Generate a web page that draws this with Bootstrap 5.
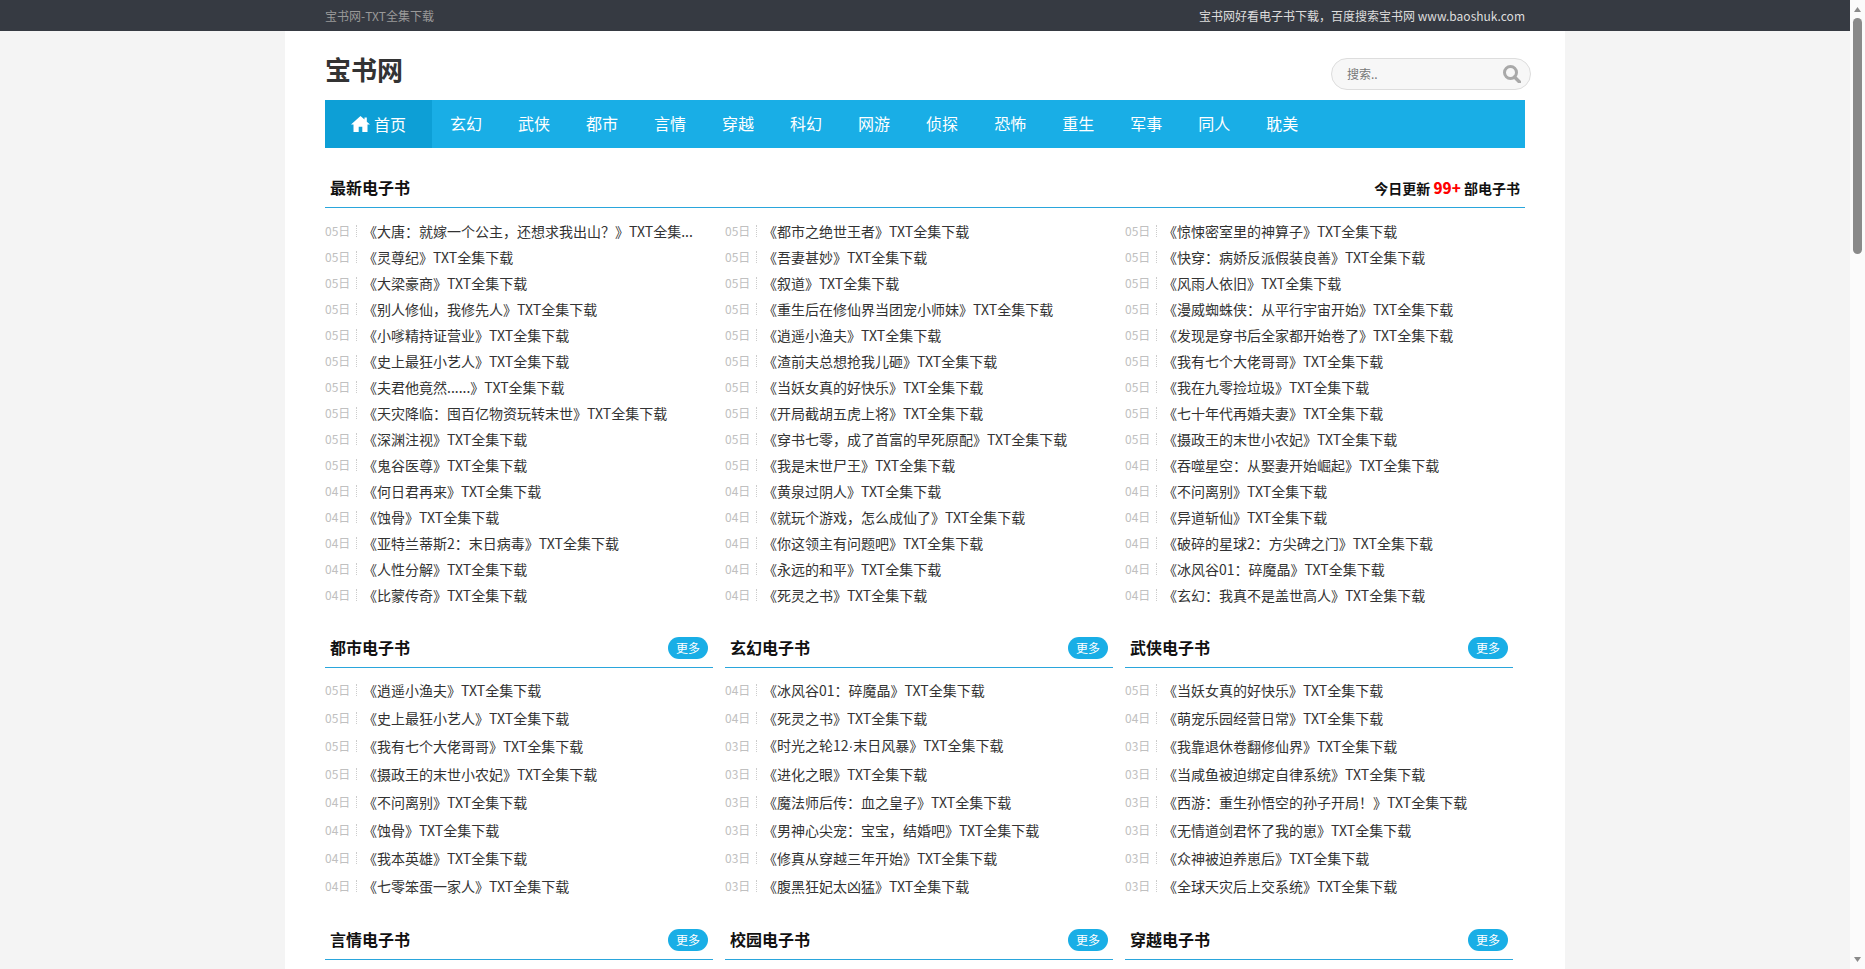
<!DOCTYPE html>
<html lang="zh-CN">
<head>
<meta charset="utf-8">
<title>宝书网-TXT全集下载</title>
<link href="https://cdn.jsdelivr.net/npm/bootstrap@5.3.0/dist/css/bootstrap.min.css" rel="stylesheet">
<style>
body{background:#f4f4f4;color:#333;font-family:"Noto Sans CJK SC","Liberation Sans",sans-serif;font-size:14px;margin-right:15px}
.top-strip{background:#363a42;height:31px;font-size:12px;line-height:31px}
.top-inner{width:1200px;margin:0 auto}
.top-left{color:#999}
.top-right{color:#ddd}
.page-panel{width:1280px;margin:0 auto;padding:0 40px 40px;background:#fff}
.site-head{height:69px}
.site-logo{font-size:26px;font-weight:700;color:#333;line-height:36px;margin-top:20px}
.search-box{width:200px;height:32px;margin:27px -6px 0 0;border:1px solid #ddd;background:#f7f7f7;border-radius:16px;padding:0 9px 0 15px}
.search-box input{font-size:12px;color:#666;width:100%;min-width:0;outline:0;padding:0}
.search-box input::placeholder{color:#777}
.main-nav{background:#19aee6;height:48px}
.main-nav .nav-link{color:#fff;font-size:16px;line-height:47px;height:48px;padding:0 18px}
.main-nav .nav-link.active-tab{background:#0d9fd6;width:107px;padding:0 0 0 26px;display:flex;align-items:center;gap:4px}
.sect-head{height:40px;border-bottom:1px solid #2aa6dc;padding:0 5px;line-height:39px}
.sect-title{font-size:16px;font-weight:700;color:#111;margin:0;line-height:39px}
.sect-note{font-size:14px;font-weight:700;color:#111}
.sect-note b{color:#f00;font-size:15px}
.more-pill{width:40px;height:22px;line-height:22px;background:#19aee6;color:#fff;font-size:12px;text-align:center;text-decoration:none}
.latest-sect{margin-top:20px}
.latest-list{margin-top:10px}
.book-list{list-style:none;margin:0;padding:0}
.book-list li{display:flex;align-items:center;height:26px;white-space:nowrap}
.day-tag{width:32px;flex:none;font-size:12px;line-height:12px;color:#c0c0c0;border-right:1px dotted #ccc}
.book-link{margin-left:6px;color:#333;text-decoration:none}
.narrow-dot{font-family:"Liberation Sans",sans-serif}
.cat-sect{margin-top:20px}
.cat-box{margin-right:12px}
.cat-box .book-list{margin-top:8px}
.cat-box .book-list li{height:28px}
.fake-scroll{position:fixed;top:0;right:0;width:15px;height:100vh;background:#fbfbfb;padding:7px 2px 7px 3px}
.scroll-thumb{width:9px;height:236px;margin-top:6px;background:#8a8a8a;border-radius:5px}
.scroll-arrow{display:block;margin-left:1px}
.scroll-arrow-down{margin-top:auto}
</style>
</head>
<body>
<div class="top-strip">
  <div class="top-inner d-flex justify-content-between">
    <span class="top-left">宝书网-TXT全集下载</span>
    <span class="top-right">宝书网好看电子书下载，百度搜索宝书网 www.baoshuk.com</span>
  </div>
</div>
<div class="page-panel">
  <header class="site-head d-flex justify-content-between align-items-start">
    <div class="site-logo">宝书网</div>
    <form class="search-box d-flex align-items-center">
      <input class="border-0 bg-transparent" type="text" placeholder="搜索..">
      <svg width="18" height="18" viewBox="0 0 18 18" class="flex-shrink-0" aria-hidden="true"><circle cx="7.5" cy="7.5" r="6" fill="none" stroke="#a9a9a9" stroke-width="3"/><path d="M11.5 12 L16.5 17" stroke="#a9a9a9" stroke-width="3.4" stroke-linecap="round"/></svg>
    </form>
  </header>
  <nav class="main-nav nav">
    <a class="nav-link active-tab" href="#"><svg width="19" height="16" viewBox="0 0 19 16" aria-hidden="true"><path fill="#fff" d="M9.5 0 L13.5 3.6 V1.5 H15.8 V5.7 L19 8.6 H16.5 V16 H11.3 V10.8 H7.7 V16 H2.5 V8.6 H0 Z"/></svg>首页</a>
    <a class="nav-link" href="#">玄幻</a>
    <a class="nav-link" href="#">武侠</a>
    <a class="nav-link" href="#">都市</a>
    <a class="nav-link" href="#">言情</a>
    <a class="nav-link" href="#">穿越</a>
    <a class="nav-link" href="#">科幻</a>
    <a class="nav-link" href="#">网游</a>
    <a class="nav-link" href="#">侦探</a>
    <a class="nav-link" href="#">恐怖</a>
    <a class="nav-link" href="#">重生</a>
    <a class="nav-link" href="#">军事</a>
    <a class="nav-link" href="#">同人</a>
    <a class="nav-link" href="#">耽美</a>
  </nav>

  <section class="latest-sect">
    <div class="sect-head d-flex justify-content-between">
      <h2 class="sect-title">最新电子书</h2>
      <div class="sect-note">今日更新 <b>99+</b> 部电子书</div>
    </div>
    <div class="row g-0 latest-list">
      <div class="col-4">
        <ul class="book-list">
          <li><span class="day-tag">05日</span><a class="book-link" href="#">《大唐：就嫁一个公主，还想求我出山？》TXT全集...</a></li>
          <li><span class="day-tag">05日</span><a class="book-link" href="#">《灵尊纪》TXT全集下载</a></li>
          <li><span class="day-tag">05日</span><a class="book-link" href="#">《大梁豪商》TXT全集下载</a></li>
          <li><span class="day-tag">05日</span><a class="book-link" href="#">《别人修仙，我修先人》TXT全集下载</a></li>
          <li><span class="day-tag">05日</span><a class="book-link" href="#">《小嗲精持证营业》TXT全集下载</a></li>
          <li><span class="day-tag">05日</span><a class="book-link" href="#">《史上最狂小艺人》TXT全集下载</a></li>
          <li><span class="day-tag">05日</span><a class="book-link" href="#">《夫君他竟然......》TXT全集下载</a></li>
          <li><span class="day-tag">05日</span><a class="book-link" href="#">《天灾降临：囤百亿物资玩转末世》TXT全集下载</a></li>
          <li><span class="day-tag">05日</span><a class="book-link" href="#">《深渊注视》TXT全集下载</a></li>
          <li><span class="day-tag">05日</span><a class="book-link" href="#">《鬼谷医尊》TXT全集下载</a></li>
          <li><span class="day-tag">04日</span><a class="book-link" href="#">《何日君再来》TXT全集下载</a></li>
          <li><span class="day-tag">04日</span><a class="book-link" href="#">《蚀骨》TXT全集下载</a></li>
          <li><span class="day-tag">04日</span><a class="book-link" href="#">《亚特兰蒂斯2：末日病毒》TXT全集下载</a></li>
          <li><span class="day-tag">04日</span><a class="book-link" href="#">《人性分解》TXT全集下载</a></li>
          <li><span class="day-tag">04日</span><a class="book-link" href="#">《比蒙传奇》TXT全集下载</a></li>
        </ul>
      </div>
      <div class="col-4">
        <ul class="book-list">
          <li><span class="day-tag">05日</span><a class="book-link" href="#">《都市之绝世王者》TXT全集下载</a></li>
          <li><span class="day-tag">05日</span><a class="book-link" href="#">《吾妻甚妙》TXT全集下载</a></li>
          <li><span class="day-tag">05日</span><a class="book-link" href="#">《叙道》TXT全集下载</a></li>
          <li><span class="day-tag">05日</span><a class="book-link" href="#">《重生后在修仙界当团宠小师妹》TXT全集下载</a></li>
          <li><span class="day-tag">05日</span><a class="book-link" href="#">《逍遥小渔夫》TXT全集下载</a></li>
          <li><span class="day-tag">05日</span><a class="book-link" href="#">《渣前夫总想抢我儿砸》TXT全集下载</a></li>
          <li><span class="day-tag">05日</span><a class="book-link" href="#">《当妖女真的好快乐》TXT全集下载</a></li>
          <li><span class="day-tag">05日</span><a class="book-link" href="#">《开局截胡五虎上将》TXT全集下载</a></li>
          <li><span class="day-tag">05日</span><a class="book-link" href="#">《穿书七零，成了首富的早死原配》TXT全集下载</a></li>
          <li><span class="day-tag">05日</span><a class="book-link" href="#">《我是末世尸王》TXT全集下载</a></li>
          <li><span class="day-tag">04日</span><a class="book-link" href="#">《黄泉过阴人》TXT全集下载</a></li>
          <li><span class="day-tag">04日</span><a class="book-link" href="#">《就玩个游戏，怎么成仙了》TXT全集下载</a></li>
          <li><span class="day-tag">04日</span><a class="book-link" href="#">《你这领主有问题吧》TXT全集下载</a></li>
          <li><span class="day-tag">04日</span><a class="book-link" href="#">《永远的和平》TXT全集下载</a></li>
          <li><span class="day-tag">04日</span><a class="book-link" href="#">《死灵之书》TXT全集下载</a></li>
        </ul>
      </div>
      <div class="col-4">
        <ul class="book-list">
          <li><span class="day-tag">05日</span><a class="book-link" href="#">《惊悚密室里的神算子》TXT全集下载</a></li>
          <li><span class="day-tag">05日</span><a class="book-link" href="#">《快穿：病娇反派假装良善》TXT全集下载</a></li>
          <li><span class="day-tag">05日</span><a class="book-link" href="#">《风雨人依旧》TXT全集下载</a></li>
          <li><span class="day-tag">05日</span><a class="book-link" href="#">《漫威蜘蛛侠：从平行宇宙开始》TXT全集下载</a></li>
          <li><span class="day-tag">05日</span><a class="book-link" href="#">《发现是穿书后全家都开始卷了》TXT全集下载</a></li>
          <li><span class="day-tag">05日</span><a class="book-link" href="#">《我有七个大佬哥哥》TXT全集下载</a></li>
          <li><span class="day-tag">05日</span><a class="book-link" href="#">《我在九零捡垃圾》TXT全集下载</a></li>
          <li><span class="day-tag">05日</span><a class="book-link" href="#">《七十年代再婚夫妻》TXT全集下载</a></li>
          <li><span class="day-tag">05日</span><a class="book-link" href="#">《摄政王的末世小农妃》TXT全集下载</a></li>
          <li><span class="day-tag">04日</span><a class="book-link" href="#">《吞噬星空：从娶妻开始崛起》TXT全集下载</a></li>
          <li><span class="day-tag">04日</span><a class="book-link" href="#">《不问离别》TXT全集下载</a></li>
          <li><span class="day-tag">04日</span><a class="book-link" href="#">《异道斩仙》TXT全集下载</a></li>
          <li><span class="day-tag">04日</span><a class="book-link" href="#">《破碎的星球2：方尖碑之门》TXT全集下载</a></li>
          <li><span class="day-tag">04日</span><a class="book-link" href="#">《冰风谷01：碎魔晶》TXT全集下载</a></li>
          <li><span class="day-tag">04日</span><a class="book-link" href="#">《玄幻：我真不是盖世高人》TXT全集下载</a></li>
        </ul>
      </div>
    </div>
  </section>

  <div class="row g-0 cat-sect">
    <div class="col-4"><div class="cat-box">
      <div class="sect-head d-flex justify-content-between align-items-center"><h2 class="sect-title">都市电子书</h2><a class="more-pill rounded-pill" href="#">更多</a></div>
      <ul class="book-list">
        <li><span class="day-tag">05日</span><a class="book-link" href="#">《逍遥小渔夫》TXT全集下载</a></li>
        <li><span class="day-tag">05日</span><a class="book-link" href="#">《史上最狂小艺人》TXT全集下载</a></li>
        <li><span class="day-tag">05日</span><a class="book-link" href="#">《我有七个大佬哥哥》TXT全集下载</a></li>
        <li><span class="day-tag">05日</span><a class="book-link" href="#">《摄政王的末世小农妃》TXT全集下载</a></li>
        <li><span class="day-tag">04日</span><a class="book-link" href="#">《不问离别》TXT全集下载</a></li>
        <li><span class="day-tag">04日</span><a class="book-link" href="#">《蚀骨》TXT全集下载</a></li>
        <li><span class="day-tag">04日</span><a class="book-link" href="#">《我本英雄》TXT全集下载</a></li>
        <li><span class="day-tag">04日</span><a class="book-link" href="#">《七零笨蛋一家人》TXT全集下载</a></li>
      </ul>
    </div></div>
    <div class="col-4"><div class="cat-box">
      <div class="sect-head d-flex justify-content-between align-items-center"><h2 class="sect-title">玄幻电子书</h2><a class="more-pill rounded-pill" href="#">更多</a></div>
      <ul class="book-list">
        <li><span class="day-tag">04日</span><a class="book-link" href="#">《冰风谷01：碎魔晶》TXT全集下载</a></li>
        <li><span class="day-tag">04日</span><a class="book-link" href="#">《死灵之书》TXT全集下载</a></li>
        <li><span class="day-tag">03日</span><a class="book-link" href="#">《时光之轮12<span class="narrow-dot">·</span>末日风暴》TXT全集下载</a></li>
        <li><span class="day-tag">03日</span><a class="book-link" href="#">《进化之眼》TXT全集下载</a></li>
        <li><span class="day-tag">03日</span><a class="book-link" href="#">《魔法师后传：血之皇子》TXT全集下载</a></li>
        <li><span class="day-tag">03日</span><a class="book-link" href="#">《男神心尖宠：宝宝，结婚吧》TXT全集下载</a></li>
        <li><span class="day-tag">03日</span><a class="book-link" href="#">《修真从穿越三年开始》TXT全集下载</a></li>
        <li><span class="day-tag">03日</span><a class="book-link" href="#">《腹黑狂妃太凶猛》TXT全集下载</a></li>
      </ul>
    </div></div>
    <div class="col-4"><div class="cat-box">
      <div class="sect-head d-flex justify-content-between align-items-center"><h2 class="sect-title">武侠电子书</h2><a class="more-pill rounded-pill" href="#">更多</a></div>
      <ul class="book-list">
        <li><span class="day-tag">05日</span><a class="book-link" href="#">《当妖女真的好快乐》TXT全集下载</a></li>
        <li><span class="day-tag">04日</span><a class="book-link" href="#">《萌宠乐园经营日常》TXT全集下载</a></li>
        <li><span class="day-tag">03日</span><a class="book-link" href="#">《我靠退休卷翻修仙界》TXT全集下载</a></li>
        <li><span class="day-tag">03日</span><a class="book-link" href="#">《当咸鱼被迫绑定自律系统》TXT全集下载</a></li>
        <li><span class="day-tag">03日</span><a class="book-link" href="#">《西游：重生孙悟空的孙子开局！》TXT全集下载</a></li>
        <li><span class="day-tag">03日</span><a class="book-link" href="#">《无情道剑君怀了我的崽》TXT全集下载</a></li>
        <li><span class="day-tag">03日</span><a class="book-link" href="#">《众神被迫养崽后》TXT全集下载</a></li>
        <li><span class="day-tag">03日</span><a class="book-link" href="#">《全球天灾后上交系统》TXT全集下载</a></li>
      </ul>
    </div></div>
  </div>

  <div class="row g-0 cat-sect">
    <div class="col-4"><div class="cat-box">
      <div class="sect-head d-flex justify-content-between align-items-center"><h2 class="sect-title">言情电子书</h2><a class="more-pill rounded-pill" href="#">更多</a></div>
    </div></div>
    <div class="col-4"><div class="cat-box">
      <div class="sect-head d-flex justify-content-between align-items-center"><h2 class="sect-title">校园电子书</h2><a class="more-pill rounded-pill" href="#">更多</a></div>
    </div></div>
    <div class="col-4"><div class="cat-box">
      <div class="sect-head d-flex justify-content-between align-items-center"><h2 class="sect-title">穿越电子书</h2><a class="more-pill rounded-pill" href="#">更多</a></div>
    </div></div>
  </div>
</div>
<div class="fake-scroll d-flex flex-column" aria-hidden="true">
  <svg class="scroll-arrow" width="7" height="5" viewBox="0 0 7 5"><path fill="#8a8a8a" d="M3.5 0 L7 5 H0 Z"/></svg>
  <div class="scroll-thumb"></div>
  <svg class="scroll-arrow scroll-arrow-down" width="7" height="5" viewBox="0 0 7 5"><path fill="#8a8a8a" d="M0 0 H7 L3.5 5 Z"/></svg>
</div>
<script src="https://cdn.jsdelivr.net/npm/bootstrap@5.3.0/dist/js/bootstrap.bundle.min.js"></script>
</body>
</html>
